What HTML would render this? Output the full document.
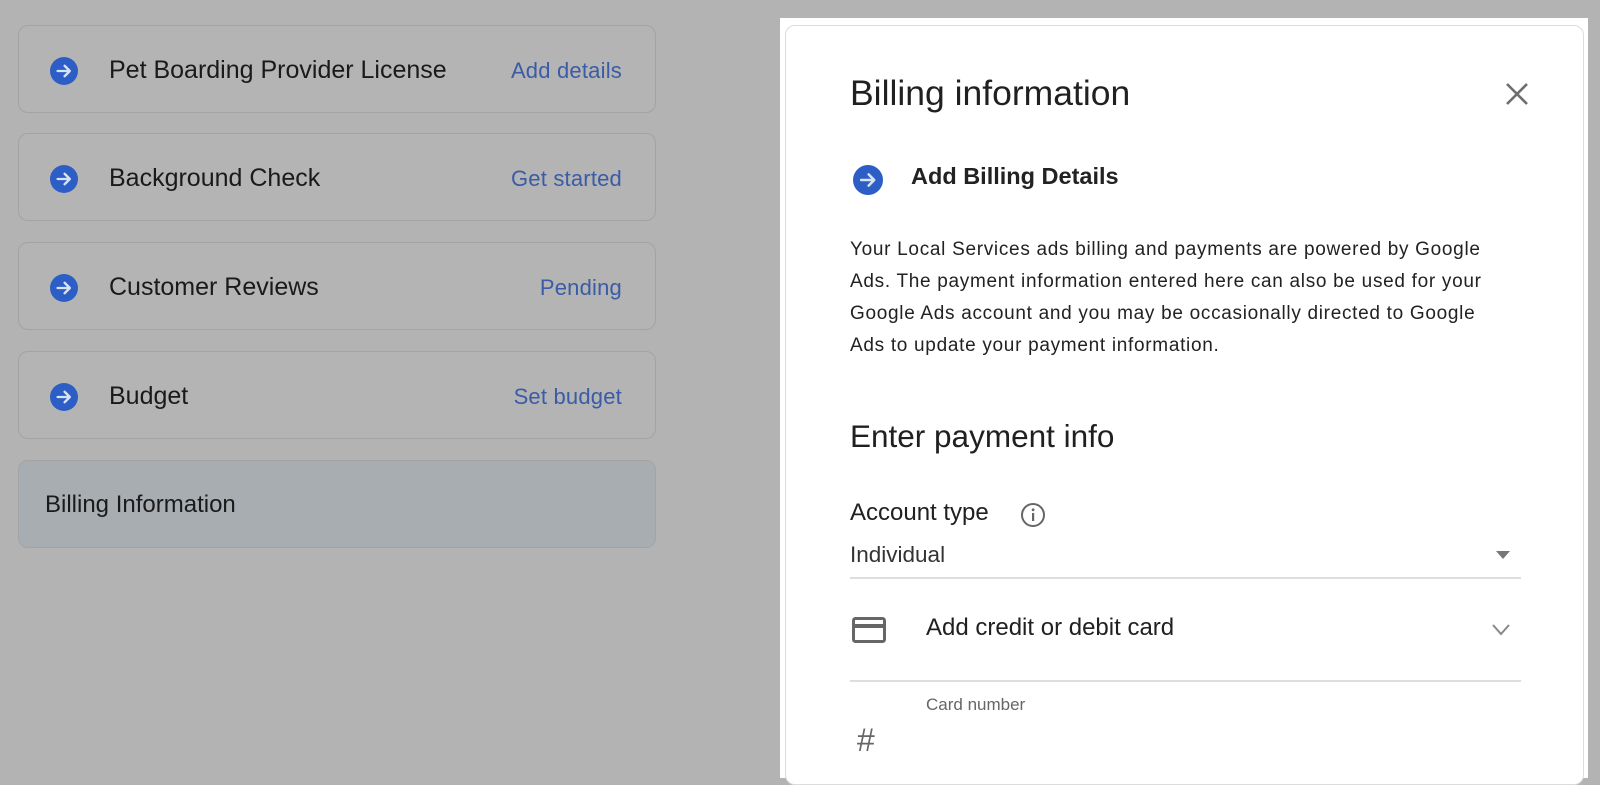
<!DOCTYPE html>
<html><head><meta charset="utf-8"><style>
*{margin:0;padding:0;box-sizing:border-box}
body{width:1600px;height:762px;background:#b3b3b3;font-family:"Liberation Sans",sans-serif;position:relative;overflow:hidden;color:#1e1e1e}
.card{position:absolute;left:18px;width:638px;height:88px;border:1px solid #a3a3a3;border-radius:10px;background:#b4b4b4}
.card .ic{position:absolute;left:31px;top:31px;width:28px;height:28px}
.card .t{position:absolute;left:90px;top:30px;font-size:25px;color:#1a1a1a;white-space:nowrap}
.card .a{position:absolute;right:33px;top:32px;font-size:22px;color:#3a5ca6;white-space:nowrap;letter-spacing:0.2px}
.abs{position:absolute;white-space:nowrap}
</style></head><body>
<svg width="0" height="0" style="position:absolute"><defs><symbol id="arr" viewBox="0 0 24 24"><circle cx="12" cy="12" r="12" fill="#2c5ec6"/><path d="M6.5 12h10M12.5 7.5l4.5 4.5-4.5 4.5" stroke="#d8e2f5" stroke-width="2" fill="none" stroke-linecap="round" stroke-linejoin="round"/></symbol></defs></svg>

<div class="card" style="top:25px"><svg class="ic"><use href="#arr"/></svg><div class="t">Pet Boarding Provider License</div><div class="a">Add details</div></div>
<div class="card" style="top:133px"><svg class="ic"><use href="#arr"/></svg><div class="t">Background Check</div><div class="a">Get started</div></div>
<div class="card" style="top:242px"><svg class="ic"><use href="#arr"/></svg><div class="t">Customer Reviews</div><div class="a">Pending</div></div>
<div class="card" style="top:351px"><svg class="ic"><use href="#arr"/></svg><div class="t">Budget</div><div class="a">Set budget</div></div>
<div class="card" style="top:460px;background:#a8adb1"><div class="t" style="left:26px;font-size:24px">Billing Information</div></div>

<div class="abs" style="left:780px;top:18px;width:808px;height:760px;background:#fff"></div>
<div class="abs" style="left:785px;top:25px;width:799px;height:760px;border:1px solid #dcdcdc;border-radius:10px;background:#fff"></div>

<div class="abs" style="left:850px;top:73px;font-size:35.5px;color:#202020">Billing information</div>
<svg class="abs" style="left:1504px;top:81px" width="26" height="26" viewBox="0 0 26 26"><path d="M3 3L23 23M23 3L3 23" stroke="#6e6e6e" stroke-width="2.6"/></svg>

<svg class="abs" style="left:853px;top:165px" width="30" height="30"><use href="#arr"/></svg>
<div class="abs" style="left:911px;top:163px;font-size:23.5px;font-weight:bold;color:#222">Add Billing Details</div>

<div class="abs" style="left:850px;top:234px;font-size:19px;letter-spacing:0.7px;line-height:32px;color:#222">Your Local Services ads billing and payments are powered by Google<br>Ads. The payment information entered here can also be used for your<br>Google Ads account and you may be occasionally directed to Google<br>Ads to update your payment information.</div>

<div class="abs" style="left:850px;top:418px;font-size:31.5px;color:#202020">Enter payment info</div>
<div class="abs" style="left:850px;top:499px;font-size:24px;color:#202020">Account type</div>
<svg class="abs" style="left:1020px;top:502px" width="26" height="26" viewBox="0 0 26 26"><circle cx="13" cy="13" r="11" stroke="#666" stroke-width="2" fill="none"/><rect x="12" y="11" width="2.2" height="8" fill="#666"/><circle cx="13.1" cy="7.8" r="1.4" fill="#666"/></svg>
<div class="abs" style="left:850px;top:542px;font-size:22.5px;color:#333">Individual</div>
<svg class="abs" style="left:1495px;top:550px" width="16" height="10"><path d="M1 1h14L8 9z" fill="#777"/></svg>
<div class="abs" style="left:850px;top:577px;width:671px;height:2px;background:#dedede"></div>

<svg class="abs" style="left:852px;top:617px" width="34" height="26" viewBox="0 0 34 26"><rect x="1.5" y="1.5" width="31" height="23" rx="2" stroke="#666" stroke-width="3" fill="none"/><rect x="2" y="7" width="30" height="4" fill="#666"/></svg>
<div class="abs" style="left:926px;top:614px;font-size:24px;color:#202020">Add credit or debit card</div>
<svg class="abs" style="left:1492px;top:624px" width="18" height="12"><path d="M1 1l8 9 8-9" stroke="#888" stroke-width="2" fill="none"/></svg>
<div class="abs" style="left:850px;top:680px;width:671px;height:2px;background:#dedede"></div>

<div class="abs" style="left:926px;top:695px;font-size:17px;color:#666">Card number</div>
<div class="abs" style="left:857px;top:722px;font-size:32px;color:#666">#</div>
</body></html>
